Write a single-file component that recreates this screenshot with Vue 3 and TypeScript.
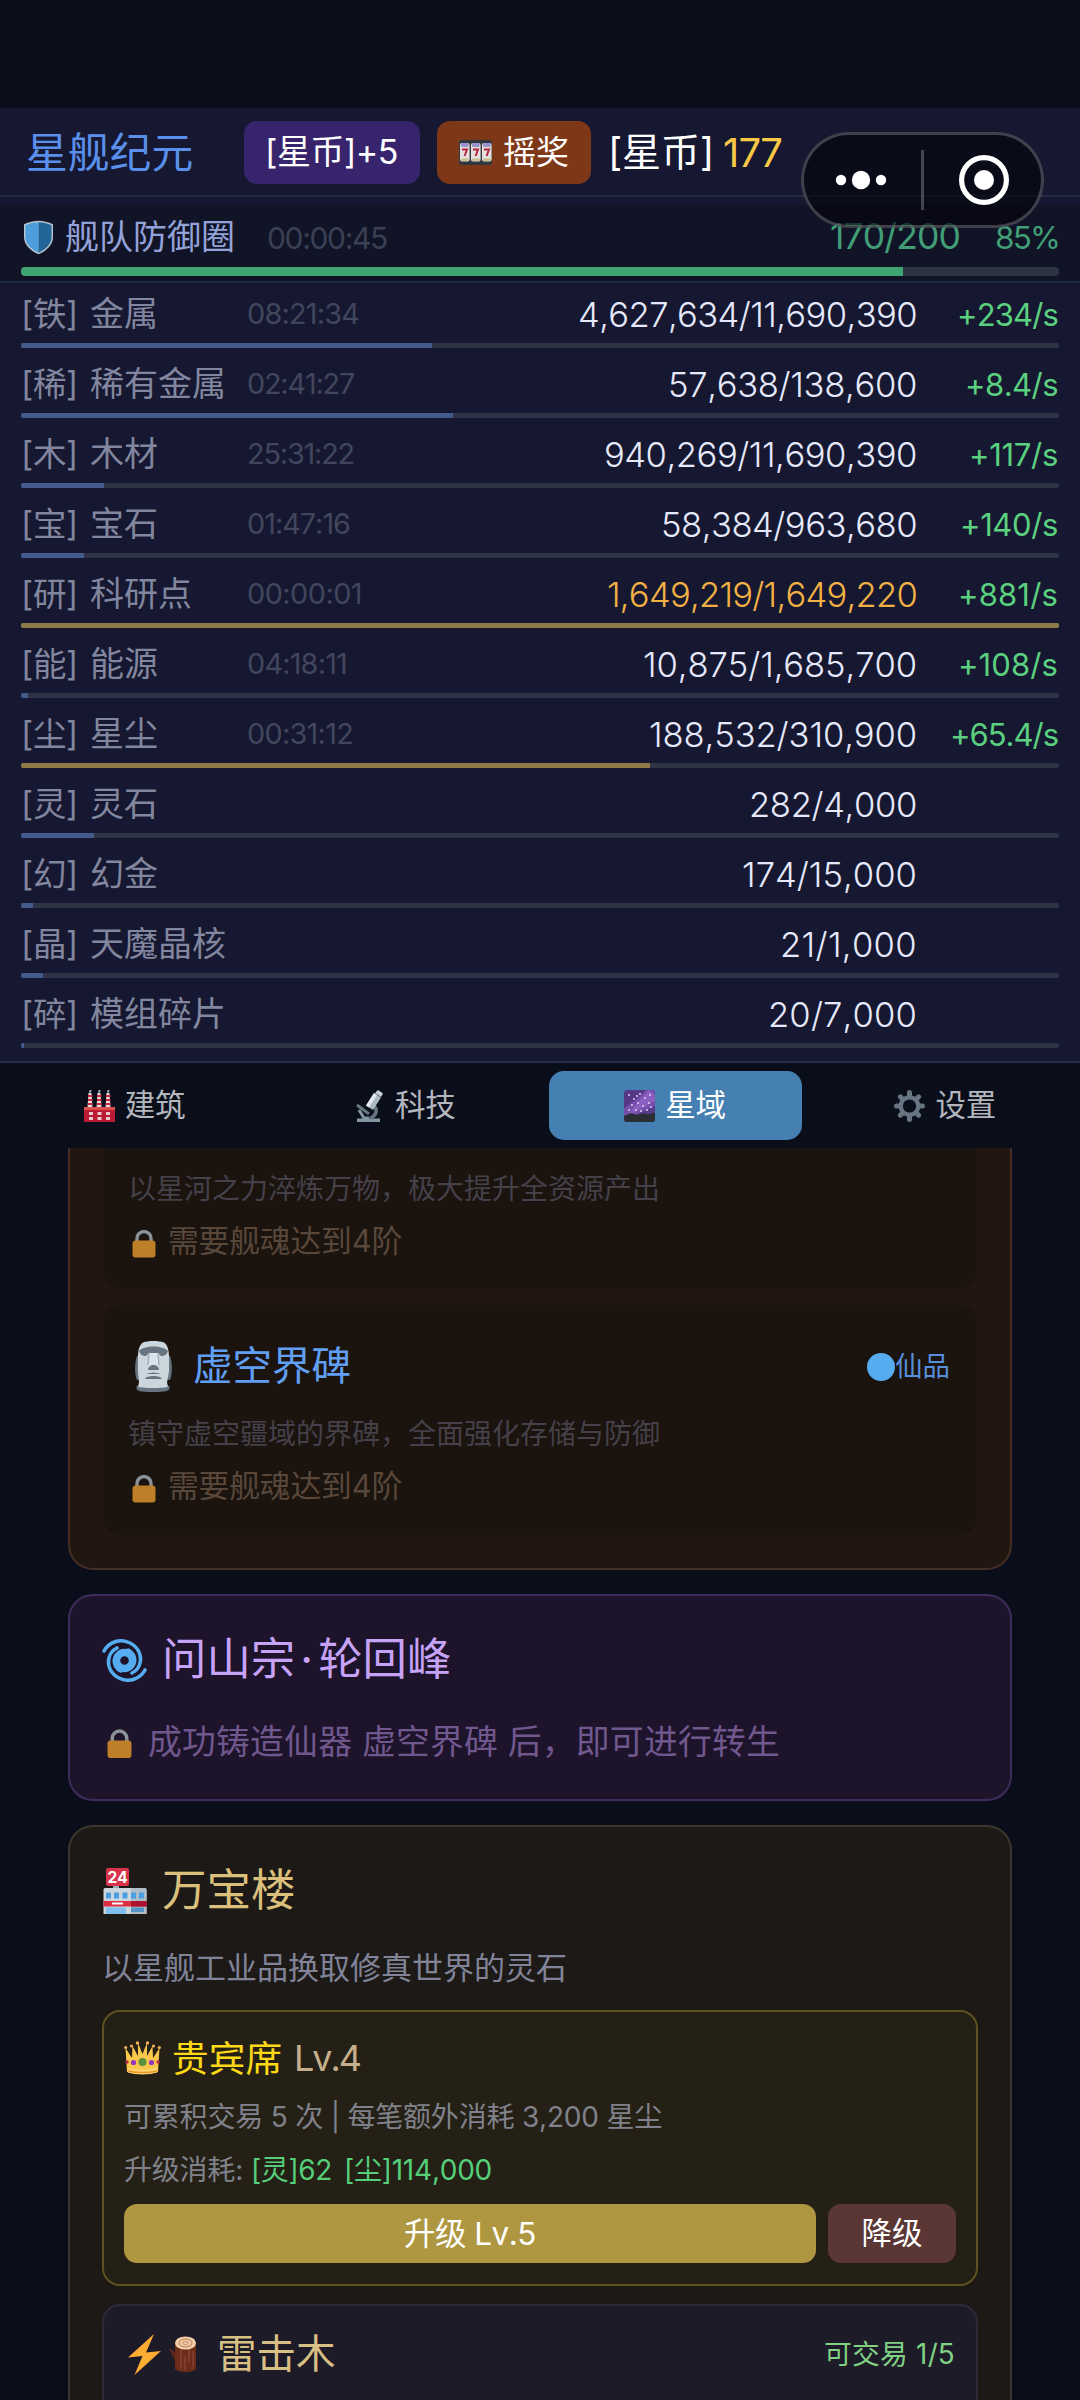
<script setup lang="ts">
import type { Directive } from 'vue'

interface Resource {
  tag: string
  name: string
  value: number
  cap: number
  width: number
  time?: string
  timeWidth?: number
  rate?: string
  rateWidth?: number
  tone?: 'full' | 'gold'
}

// Spreads the letters of a text so that it takes the given width.
const vFit: Directive<HTMLElement, number> = {
  mounted(el, binding) {
    const range = document.createRange()
    range.selectNodeContents(el)
    const natural = range.getBoundingClientRect().width
    const count = Array.from(el.textContent ?? '').length
    if (count > 0) el.style.letterSpacing = `${(binding.value - natural) / count}px`
  },
}

const resources: Resource[] = [
  { tag: '铁', name: '金属', value: 4627634, cap: 11690390, width: 339, time: '08:21:34', timeWidth: 112, rate: '+234/s', rateWidth: 101 },
  { tag: '稀', name: '稀有金属', value: 57638, cap: 138600, width: 249, time: '02:41:27', timeWidth: 107, rate: '+8.4/s', rateWidth: 93 },
  { tag: '木', name: '木材', value: 940269, cap: 11690390, width: 313, time: '25:31:22', timeWidth: 107, rate: '+117/s', rateWidth: 89 },
  { tag: '宝', name: '宝石', value: 58384, cap: 963680, width: 256, time: '01:47:16', timeWidth: 103, rate: '+140/s', rateWidth: 98 },
  { tag: '研', name: '科研点', value: 1649219, cap: 1649220, width: 310, time: '00:00:01', timeWidth: 115, rate: '+881/s', rateWidth: 100, tone: 'full' },
  { tag: '能', name: '能源', value: 10875, cap: 1685700, width: 274, time: '04:18:11', timeWidth: 100, rate: '+108/s', rateWidth: 100 },
  { tag: '尘', name: '星尘', value: 188532, cap: 310900, width: 268, time: '00:31:12', timeWidth: 106, rate: '+65.4/s', rateWidth: 108, tone: 'gold' },
  { tag: '灵', name: '灵石', value: 282, cap: 4000, width: 168 },
  { tag: '幻', name: '幻金', value: 174, cap: 15000, width: 175 },
  { tag: '晶', name: '天魔晶核', value: 21, cap: 1000, width: 137 },
  { tag: '碎', name: '模组碎片', value: 20, cap: 7000, width: 149 },
]

const fmt = (n: number) => n.toLocaleString('en-US')
const share = (r: Resource) => `${Math.max((r.value / r.cap) * 100, 0.3)}%`

const stars = [
  [5, 5], [10, 9], [16, 4], [21, 8], [26, 5], [8, 15], [14, 13], [19, 16],
  [25, 13], [5, 20], [12, 20], [23, 20], [17, 21], [27, 17], [13, 6],
]
</script>

<template>
  <div class="app">
    <svg class="sprite" aria-hidden="true">
      <symbol id="lock" viewBox="0 0 24 29">
        <path d="M5 14V9.500a7 7 0 0 1 14 0V14" fill="none" stroke="#8a9197" stroke-width="3.400" />
        <rect x="0.500" y="11.500" width="23" height="17" rx="3" fill="#bd8029" />
      </symbol>
    </svg>

    <div class="capsule">
      <svg class="dots" viewBox="0 0 54 22">
        <circle cx="7" cy="11" r="5.200" />
        <circle cx="27" cy="11" r="9.200" />
        <circle cx="47" cy="11" r="5.200" />
      </svg>
      <i class="split"></i>
      <svg class="target" viewBox="0 0 52 52">
        <circle cx="26" cy="26" r="22.400" fill="none" stroke="#fff" stroke-width="5.200" />
        <circle cx="26" cy="26" r="10" />
      </svg>
    </div>

    <header class="top">
      <h1>星舰纪元</h1>
      <button class="btn coin"><span v-fit="133">[星币]+5</span></button>
      <button class="btn draw">
        <svg width="33" height="25" viewBox="0 0 33 25">
          <rect width="33" height="25" rx="3" fill="#31373d" />
          <g v-for="n in 3" :key="n" :transform="`translate(${(n - 1) * 11} 0)`">
            <rect x="1" y="3" width="9.600" height="18.500" rx="2" fill="#e4e0de" />
            <rect x="2" y="3" width="7.600" height="4" rx="1" fill="#9a91cf" />
            <rect x="2" y="18.500" width="7.600" height="2.500" rx="1" fill="#c9bd8f" />
            <path d="M3 9.500H8L5.600 16" fill="none" stroke="#b3213f" stroke-width="1.900" />
          </g>
        </svg>
        <span>摇奖</span>
      </button>
      <span class="unit" v-fit="106">[星币]</span>
      <span class="coins" v-fit="59">177</span>
    </header>

    <section class="defense">
      <div class="defense-line">
        <svg width="31" height="35" viewBox="0 0 31 35">
          <path d="M15.500.700C20 .8 25.500 2 30 4.200V17C30 25.500 23 31 15.500 34.300 8 31 1 25.500 1 17V4.200C5.500 2 11 .8 15.500.700Z" fill="#b4c5d0" />
          <path d="M15.500 2.300C11.500 2.400 6.500 3.400 2.500 5.200V17C2.500 24.500 9 29.700 15.500 32.700Z" fill="#4d9edc" />
          <path d="M15.500 2.300C19.500 2.400 24.500 3.400 28.500 5.200V17C28.500 24.500 22 29.700 15.500 32.700Z" fill="#226699" />
        </svg>
        <span class="d-name">舰队防御圈</span>
        <span class="d-time" v-fit="120">00:00:45</span>
        <span class="d-value" v-fit="130">170/200</span>
        <span class="d-pct"><span v-fit="64">85%</span></span>
      </div>
      <div class="d-bar"><i></i></div>
    </section>

    <section class="resources">
      <div v-for="r in resources" :key="r.name" class="res" :class="r.tone">
        <div class="res-line">
          <span class="tag"><span v-fit="57">[{{ r.tag }}]</span></span>
          <span class="name">{{ r.name }}</span>
          <span class="time"><span v-if="r.time" v-fit="r.timeWidth ?? 0">{{ r.time }}</span></span>
          <span class="value"><span v-fit="r.width">{{ fmt(r.value) }}/{{ fmt(r.cap) }}</span></span>
          <span class="rate"><span v-if="r.rate" v-fit="r.rateWidth ?? 0">{{ r.rate }}</span></span>
        </div>
        <div class="bar"><i :style="{ width: share(r) }"></i></div>
      </div>
    </section>

    <nav class="tabs">
      <a class="tab">
        <svg width="31" height="32" viewBox="0 0 31 32">
          <g fill="#e6dcdc"><path d="M4.500 3h3l1 15h-5zM13.500 3h3l1 15h-5zM22.500 3h3l1 15h-5z" /></g>
          <path d="M4 6h4.500M4 10h4.500M3.700 14h5M13 6h4.500M13 10h4.500M12.700 14h5M22 6h4.500M22 10h4.500M21.700 14h5" stroke="#c92a40" stroke-width="2" />
          <path d="M5.500 2.500 7 0M14.500 2.500 16 0M23.500 2.500 25 0" stroke="#b9c4cb" stroke-width="1.500" />
          <path d="M0 17h31v15H0z" fill="#bb1a34" /><path d="M0 17h31v3H0z" fill="#dd5050" />
          <path d="M5 22h4v3H5zM13.500 22h4v3h-4zM22 22h4v3h-4zM5 27h4v3H5zM13.500 27h4v3h-4zM22 27h4v3h-4z" fill="#f0c8cc" />
        </svg>
        <span>建筑</span>
      </a>
      <a class="tab">
        <svg width="31" height="32" viewBox="0 0 31 32">
          <path d="M3 28.500h23V32H3z" fill="#8397a3" />
          <path d="M19 15c5 4 4 10-3 13.500" fill="none" stroke="#66757f" stroke-width="3.600" />
          <path d="m3 15 12 9" stroke="#66757f" stroke-width="3" /><path d="m5 20 5 8h5" stroke="#8397a3" stroke-width="3" fill="none" />
          <path d="m20 3 7 4.500-8 12.500-7-4.500z" fill="#aab8c2" /><path d="m20 3 3 2-8 12.500-3-2z" fill="#e1e8ed" />
          <path d="m24 0 5 3.500-2 3.500-6-4z" fill="#c6d0d7" />
        </svg>
        <span>科技</span>
      </a>
      <a class="tab on">
        <svg width="31" height="32" viewBox="0 0 31 32">
          <rect width="31" height="32" rx="3.500" fill="#553986" />
          <path d="M22 0h6a3 3 0 0 1 3 3v13L9 26H0v-8l10-7z" fill="#744eaa" />
          <path d="M25 0 31 5v6L11 22l-7 3 8-11z" fill="#8b5fc0" />
          <path d="M0 26 7 23l6 2 5-1.500 6 1 7-2V29a3 3 0 0 1-3 3H3a3 3 0 0 1-3-3z" fill="#292f33" />
          <circle v-for="(s, i) in stars" :key="i" :cx="s[0]" :cy="s[1]" r="0.900" fill="#eadcf8" />
        </svg>
        <span>星域</span>
      </a>
      <a class="tab">
        <svg width="31" height="32" viewBox="0 0 31 32">
          <g stroke="#66757f" stroke-width="5" stroke-linecap="round">
            <path d="M15.500 2.500v27M2.500 16h26M6.300 6.800l18.400 18.400M24.700 6.800 6.300 25.200" />
          </g>
          <circle cx="15.500" cy="16" r="10.800" fill="#66757f" /><circle cx="15.500" cy="16" r="6.600" fill="#0b0e1b" />
        </svg>
        <span>设置</span>
      </a>
    </nav>

    <main>
      <article class="card forge">
        <div class="item cut">
          <p class="desc">以星河之力淬炼万物，极大提升全资源产出</p>
          <p class="need">
            <svg width="24" height="29"><use href="#lock" /></svg>
            <span v-fit="234">需要舰魂达到4阶</span>
          </p>
        </div>
        <div class="item">
          <div class="item-head">
            <svg width="39" height="51" viewBox="0 0 39 51">
              <path d="M3 15 8 14v24l-5 1C.500 33 .500 22 3 15ZM36 15l-5-1v24l5 1c2.500-6 2.500-17 0-24Z" fill="#66757f" />
              <path d="M2.500 45h33v2c0 3-4 4-16.500 4s-16.500-1-16.500-4z" fill="#66757f" />
              <path d="M9 1.500c5-2 16-2 21 0 3.500 2 5 8 5 14v15l-2 11 1 4c-3 2-27 2-30 0l1-4-1-11v-15c0-6 1.500-12 5-14Z" fill="#ccd6dd" />
              <path d="M5 10c5-6 24-6 29 0-1 3-3 5-7 5l-3-3h-9l-3 3c-4 0-6-2-7-5Z" fill="#66757f" />
              <path d="M15.500 12h8l1 12h-10z" fill="#dbe4ea" />
              <path d="M15 13 14 24M24 13l1 11" stroke="#9aa8b2" stroke-width="1.200" />
              <path d="M14 29c0-3 3-5 5.500-5s5.500 2 5.500 5z" fill="#66757f" />
              <path d="M12 33c5-2 10-2 15 0M11 38c1-4 16-4 17 0z" fill="#66757f" />
            </svg>
            <h3>虚空界碑</h3>
            <span class="grade">
              <svg width="28" height="28" viewBox="0 0 28 28"><circle cx="14" cy="14" r="14" fill="#55acee" /></svg>仙品
            </span>
          </div>
          <p class="desc">镇守虚空疆域的界碑，全面强化存储与防御</p>
          <p class="need">
            <svg width="24" height="29"><use href="#lock" /></svg>
            <span v-fit="234">需要舰魂达到4阶</span>
          </p>
        </div>
      </article>

      <article class="card rebirth">
        <h2>
          <svg width="45" height="43" viewBox="0 0 45 43">
            <g fill="none" stroke="#55acee" stroke-linecap="round">
              <path d="M2 12C7 3 18-1 28 4c8 4 12 12 10 20-1 5-4 8-8 10" stroke-width="3.600" />
              <path d="M43 31c-5 9-16 13-26 8C9 35 5 27 7 19c1-5 4-8 8-10" stroke-width="3.600" />
              <circle cx="22.500" cy="21.500" r="8" stroke-width="7.400" />
              <path d="M26 10.500c5 2 8 7 7 13M19 32.500c-5-2-8-7-7-13" stroke-width="2.600" />
            </g>
          </svg>
          <span>问山宗<i class="dot">·</i>轮回峰</span>
        </h2>
        <p>
          <svg width="25" height="31" viewBox="0 0 24 29"><use href="#lock" width="24" height="29" /></svg>
          <span v-fit="632">成功铸造仙器 虚空界碑 后，即可进行转生</span>
        </p>
      </article>

      <article class="card shop">
        <h2>
          <svg width="44" height="46" viewBox="0 0 44 46">
            <rect x="3" y="0" width="23" height="18" rx="2" fill="#d8334a" />
            <text x="14.500" y="14.600" text-anchor="middle" font-family="Inter, sans-serif" font-weight="700" font-size="15.500" fill="#fff">24</text>
            <path d="M10 18h6v3h-6z" fill="#99aab5" />
            <path d="M2 20h40a1.500 1.500 0 0 1 1.500 1.500V46H.500V21.500A1.500 1.500 0 0 1 2 20z" fill="#ccd6dd" />
            <path d="M28 20h14.500l1 2V46H28z" fill="#aebdc8" />
            <path d="M3 24.500h5v6H3zM11 24.500h5v6h-5zM19.500 24.500h5v6h-5zM28 24.500h5v6h-5zM36 24.500h5v6h-5z" fill="#4b9fdf" />
            <path d="M.500 33H44v5.500H.500z" fill="#dd2e44" /><path d="M28 33h16v5.500H28z" fill="#aa1330" />
            <path d="M9 34.500h11v2H9z" fill="#fff" />
            <path d="M3 39.500h20V46H3z" fill="#7fc0ee" /><path d="M28 39.500h13V44H28z" fill="#5593c4" />
          </svg>
          <span>万宝楼</span>
        </h2>
        <p class="intro">以星舰工业品换取修真世界的灵石</p>

        <div class="vip">
          <h4>
            <svg width="37" height="34" viewBox="0 0 37 34">
              <path d="M3 31 1.500 7 8 17 8.500 5 14 15 14 2l4.500 11L23 2v13l5.500-10L29 17l6.500-10L34 31c-8 2.500-23 2.500-31 0z" fill="#f9c74b" />
              <path d="M4 27c9 2 20 2 29 0v4.500c-8 2.500-21 2.500-29 0z" fill="#ffd56b" /><path d="M4 30c9 2 20 2 29 0" stroke="#e6952f" stroke-width="1.500" fill="none" />
              <g fill="#f5b15a"><circle cx="1.700" cy="6.500" r="1.600" /><circle cx="7.500" cy="5" r="1.600" /><circle cx="13.500" cy="2" r="1.700" /><circle cx="23.500" cy="2" r="1.700" /><circle cx="29.500" cy="5" r="1.600" /><circle cx="35.300" cy="6.500" r="1.600" /></g>
              <circle cx="18.500" cy="21" r="4" fill="#5c913b" /><circle cx="9.500" cy="21.500" r="2.600" fill="#9234c4" /><circle cx="27.500" cy="21.500" r="2.600" fill="#9234c4" />
              <circle cx="3" cy="21" r="1.700" fill="#c22b4b" /><circle cx="34" cy="21" r="1.700" fill="#c22b4b" />
            </svg>
            <span class="vip-name">贵宾席</span>
            <span class="lv" v-fit="66">Lv.4</span>
          </h4>
          <p><span v-fit="538">可累积交易 5 次 | 每笔额外消耗 3,200 星尘</span></p>
          <p class="cost">
            <span class="cost-key" v-fit="119">升级消耗:</span>
            <span class="ok first" v-fit="81">[灵]62</span>
            <span class="ok" v-fit="148">[尘]114,000</span>
          </p>
          <div class="actions">
            <button class="up"><span v-fit="132">升级 Lv.5</span></button>
            <button class="down">降级</button>
          </div>
        </div>

        <div class="goods">
          <svg class="bolt" width="33" height="41" viewBox="0 0 33 41">
            <path d="M26 0 0 23.500 14.500 22 6.500 41 33 17 18 18.500z" fill="#ffac33" />
          </svg>
          <svg class="log" width="28" height="37" viewBox="0 0 28 37">
            <path d="M0 12c3 1 5 4 7 5v8C4 22 2 17 0 12z" fill="#5a2419" />
            <path d="M6 6h21v27c-3 4-18 4-21 0z" fill="#6b2c1b" />
            <path d="M12 14v19M20 13v13M16 20v14M24 15v16" stroke="#8c4630" stroke-width="1.300" />
            <ellipse cx="16.500" cy="7" rx="10.500" ry="6.600" fill="#f3cfa9" />
            <ellipse cx="16.500" cy="7" rx="6.500" ry="3.800" fill="none" stroke="#c28a66" stroke-width="1.200" />
            <ellipse cx="16.500" cy="7" rx="2.800" ry="1.500" fill="none" stroke="#c28a66" stroke-width="1" />
          </svg>
          <h3>雷击木</h3>
          <span class="quota"><span v-fit="131">可交易 1/5</span></span>
        </div>
      </article>
    </main>
  </div>
</template>

<style>
html,
body {
  margin: 0;
  background: #0a0e1b;
}
</style>

<style scoped>
.app {
  position: relative;
  box-sizing: border-box;
  width: 1080px;
  height: 2400px;
  padding-top: 108px;
  overflow: hidden;
  background: #0a0d1a;
  color: #e6e9fb;
  font-family: "Inter", "Noto Sans CJK SC", sans-serif;
  font-weight: 400;
  font-kerning: none;
  line-height: 1.2;
  white-space: nowrap;
}
.app * {
  box-sizing: border-box;
}
h1, h2, h3, h4, p {
  margin: 0;
  font-weight: 400;
}
svg {
  display: block;
  flex: none;
}
.sprite {
  position: absolute;
  width: 0;
  height: 0;
}
button {
  margin: 0;
  padding: 0;
  border: 0;
  font: inherit;
  color: #fff;
  display: flex;
  align-items: center;
  justify-content: center;
}

/* system capsule floating over the header */
.capsule {
  position: absolute;
  z-index: 2;
  left: 801px;
  top: 132px;
  width: 243px;
  height: 96px;
  border: 3px solid rgba(255, 255, 255, 0.22);
  border-radius: 48px;
  background: rgba(4, 5, 12, 0.66);
  display: flex;
  align-items: center;
}
.capsule svg { fill: #fff; }
.dots { width: 54px; height: 22px; margin-left: 30px; }
.split { width: 3px; height: 60px; margin-left: 33px; background: rgba(255, 255, 255, 0.24); }
.target { width: 52px; height: 52px; margin-left: 34px; }

.top {
  height: 89px;
  padding: 2px 0 0 26px;
  display: flex;
  align-items: center;
  background: #151830;
  border-bottom: 2px solid #262a44;
}
h1 {
  width: 218px;
  color: #5a8fec;
  font-size: 41.800px;
  line-height: 60px;
}
.btn {
  height: 63px;
  border-radius: 13px;
  font-size: 34px;
}
.coin { width: 176px; padding-right: 1px; background: #38246d; }
.draw { width: 154px; margin-left: 17px; gap: 11px; background: #7e3717; font-size: 33px; }
.unit { margin-left: 17px; color: #fff; font-size: 39px; }
.coins { margin-left: 9px; color: #f9c846; font-size: 40px; }

.defense {
  height: 86px;
  padding: 3px 21px 0;
  border-top: 8px solid #151830;
  border-bottom: 2px solid #1c2942;
  background: #101426;
}
.defense-line {
  height: 59px;
  padding-left: 2px;
  display: flex;
  align-items: center;
}
.d-name { margin-left: 11px; width: 202px; font-size: 34px; color: #94a2da; }
.d-time { font-size: 30px; color: #3c4053; }
.d-value { margin-left: auto; font-size: 35.500px; color: #419e76; }
.d-pct { width: 99px; font-size: 31.500px; text-align: right; color: #419e76; }
.d-bar { height: 9px; border-radius: 4px; overflow: hidden; background: #2e3341; }
.d-bar i { display: block; width: 85%; height: 100%; background: #3fa572; }

.resources {
  height: 780px;
  padding: 0 21px;
  border-bottom: 2px solid #272b43;
  background: #151830;
}
.res { height: 70px; padding-top: 3px; }
.res-line { height: 57px; display: flex; align-items: center; }
.tag { width: 69px; font-size: 33.500px; color: #82869f; }
.name { width: 157px; font-size: 34px; color: #82869f; }
.time { width: 180px; font-size: 28.800px; color: #42465d; }
.value { flex: 1; text-align: right; font-size: 34.600px; font-weight: 350; }
.rate { width: 142px; padding-right: 1px; text-align: right; font-size: 31px; color: #5bd07f; }
.full .value { color: #f3b145; }
.bar { height: 5px; border-radius: 2px; overflow: hidden; background: #2e3345; }
.bar i { display: block; height: 100%; background: #435b8b; }
.full .bar i, .gold .bar i { background: #8f7b47; }

.tabs {
  height: 85px;
  padding: 8px 8px 0;
  display: flex;
  gap: 17px;
  background: #0a0e1b;
}
.tab {
  flex: 1;
  height: 69px;
  border-radius: 15px;
  display: flex;
  align-items: center;
  justify-content: center;
  gap: 10px;
  color: #b3b6bd;
  font-size: 30.500px;
}
.tab.on { background: #4680b2; color: #fff; }

main {
  height: 1252px;
  padding: 0 68px;
  overflow: hidden;
  background: #0a0e1b;
}
.card {
  border: 2px solid;
  border-radius: 25px;
  padding: 0 32px;
}
.forge {
  border-color: #452d24;
  border-top: 0;
  border-radius: 0 0 25px 25px;
  padding: 0 34px 33px;
  background: #211610;
}
.item {
  padding: 24px 24px 22px;
  border-radius: 16px;
  background: #1a130e;
}
.item.cut {
  height: 140px;
  padding-top: 14px;
  margin-bottom: 17px;
  border-radius: 0 0 16px 16px;
}
.item-head { height: 75px; margin-bottom: 3px; padding-left: 6px; display: flex; align-items: center; }
.item-head h3 { margin-left: 20px; font-size: 39.500px; color: #609ff4; }
.grade { margin-left: auto; margin-right: 2px; display: flex; align-items: center; font-size: 27.500px; color: #578fdc; }
.desc { height: 53px; padding-top: 1px; line-height: 53px; font-size: 28px; color: #454049; }
.need { height: 53px; padding-left: 4px; display: flex; align-items: center; gap: 12px; font-size: 30.800px; color: #59473a; }
.need svg { margin-top: 4px; }

.rebirth { height: 207px; margin-top: 24px; border-color: #3e2d5b; background: #1d132a; }
.card h2 { display: flex; align-items: center; }
.rebirth h2 { height: 60px; margin-top: 34px; gap: 15px; font-size: 44.400px; color: #c7a3f8; }
.dot { display: inline-block; width: 23px; font-style: normal; text-align: center; }
.rebirth p { height: 50px; margin-top: 27px; padding-left: 5px; display: flex; align-items: center; gap: 16px; font-size: 33.800px; color: #70578d; }
.rebirth p svg { margin-top: 3px; }

.shop { height: 640px; margin-top: 24px; border-color: #3a352e; background: #1c1916; }
.shop h2 { height: 60px; margin-top: 34px; padding-left: 1px; gap: 15px; font-size: 44.500px; color: #dbc07c; }
.intro { height: 50px; margin-top: 21px; line-height: 52px; font-size: 31px; color: #818499; }

.vip {
  height: 276px;
  margin-top: 18px;
  padding: 25px 20px 0;
  border: 2px solid #5e5223;
  border-radius: 18px;
  background: #252015;
}
.vip h4 { height: 44px; display: flex; align-items: center; }
.vip h4 svg { margin-top: -2px; }
.vip-name { margin-left: 11px; width: 122px; font-size: 36.700px; color: #fcd816; }
.lv { font-size: 36px; color: #c5ae8c; }
.vip p { height: 44px; margin-top: 15px; display: flex; align-items: center; font-size: 28px; color: #80828b; }
.vip .cost { margin-top: 9px; }
.vip .ok { color: #56cf7a; margin-left: 12px; }
.vip .ok.first { margin-left: 8px; }
.actions { margin-top: 11px; display: flex; gap: 12px; }
.actions button { height: 59px; border-radius: 13px; font-size: 30.500px; }
.actions .up { width: 692px; font-size: 31.500px; background: #ae9740; }
.actions .down { width: 128px; background: #5a3735; }

.goods {
  height: 300px;
  margin-top: 18px;
  padding: 0 21px 0 24px;
  border: 2px solid #2e2a38;
  border-radius: 18px;
  background: #1e1b29;
  display: flex;
  align-items: flex-start;
}
.goods .bolt { margin-top: 28px; }
.goods .log { margin: 30px 0 0 8px; }
.goods h3 { height: 60px; margin: 18px 0 0 20px; line-height: 60px; font-size: 39.500px; color: #d8bf84; }
.quota { height: 60px; margin: 18px 0 0 auto; line-height: 60px; font-size: 27.800px; color: #80d083; }
</style>
